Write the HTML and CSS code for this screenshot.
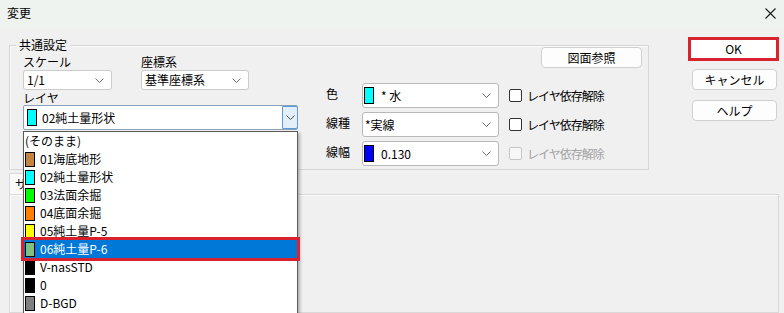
FILE: index.html
```html
<!DOCTYPE html>
<html lang="ja">
<head>
    <meta charset="UTF-8">
    <title>変更</title>
    <link rel="stylesheet" href="styles.css">
</head>
<body>
    <div class="window">
        <div class="titlebar">
            <span class="title">変更</span>
            <svg class="close" width="11" height="11" viewBox="0 0 11 11">
                <path d="M0.5 0.5 L10.5 10.5 M10.5 0.5 L0.5 10.5" stroke="#1a1a1a" stroke-width="1.1" fill="none"/>
            </svg>
        </div>

        <div class="content">
            <div class="top-row">
                <div class="group">
                    <span class="group-title">共通設定</span>

                    <div class="col-left">
                        <div class="pair">
                            <span class="lbl">スケール</span>
                            <span class="lbl">座標系</span>
                            <div class="combo">
                                <span class="value">1/1</span>
                                <svg class="chev" width="9" height="5" viewBox="0 0 9 5"><path d="M0.5 0.5 L4.5 4.5 L8.5 0.5" stroke="#6b6b6b" fill="none"/></svg>
                            </div>
                            <div class="combo">
                                <span class="value">基準座標系</span>
                                <svg class="chev" width="9" height="5" viewBox="0 0 9 5"><path d="M0.5 0.5 L4.5 4.5 L8.5 0.5" stroke="#6b6b6b" fill="none"/></svg>
                            </div>
                        </div>
                        <span class="lbl lbl-layer">レイヤ</span>
                        <div class="combo combo-layer">
                            <span class="swatch" style="background:#00ffff"></span>
                            <span class="value">02純土量形状</span>
                            <span class="drop-btn">
                                <svg width="9" height="5" viewBox="0 0 9 5"><path d="M0.5 0.5 L4.5 4.5 L8.5 0.5" stroke="#4d4d4d" fill="none"/></svg>
                            </span>

                            <ul class="droplist">
                                <li class="item plain">(そのまま)</li>
                                <li class="item"><span class="chip" style="background:#c3843f"></span>01海底地形</li>
                                <li class="item"><span class="chip" style="background:#00ffff"></span>02純土量形状</li>
                                <li class="item"><span class="chip" style="background:#00ff00"></span>03法面余掘</li>
                                <li class="item"><span class="chip" style="background:#ff8000"></span>04底面余掘</li>
                                <li class="item"><span class="chip" style="background:#ffff00"></span>05純土量P-5</li>
                                <li class="item selected"><span class="chip" style="background:#80c080"></span>06純土量P-6</li>
                                <li class="item"><span class="chip" style="background:#000000"></span>V-nasSTD</li>
                                <li class="item"><span class="chip" style="background:#000000"></span>0</li>
                                <li class="item"><span class="chip" style="background:#808080"></span>D-BGD</li>
                            </ul>
                        </div>
                    </div>

                    <div class="col-right">
                        <button class="btn btn-ref">図面参照</button>
                        <div class="props">
                            <span class="lbl">色</span>
                            <div class="combo combo-prop">
                                <span class="swatch" style="background:#00ffff"></span>
                                <span class="value">* 水</span>
                                <svg class="chev" width="9" height="5" viewBox="0 0 9 5"><path d="M0.5 0.5 L4.5 4.5 L8.5 0.5" stroke="#6b6b6b" fill="none"/></svg>
                            </div>
                            <label class="check"><span class="box"></span>レイヤ依存解除</label>

                            <span class="lbl">線種</span>
                            <div class="combo combo-prop">
                                <span class="value tight">*実線</span>
                                <svg class="chev" width="9" height="5" viewBox="0 0 9 5"><path d="M0.5 0.5 L4.5 4.5 L8.5 0.5" stroke="#6b6b6b" fill="none"/></svg>
                            </div>
                            <label class="check"><span class="box"></span>レイヤ依存解除</label>

                            <span class="lbl">線幅</span>
                            <div class="combo combo-prop">
                                <span class="swatch" style="background:#0000ff"></span>
                                <span class="value">0.130</span>
                                <svg class="chev" width="9" height="5" viewBox="0 0 9 5"><path d="M0.5 0.5 L4.5 4.5 L8.5 0.5" stroke="#6b6b6b" fill="none"/></svg>
                            </div>
                            <label class="check disabled"><span class="box"></span>レイヤ依存解除</label>
                        </div>
                    </div>
                </div>

                <div class="side-buttons">
                    <div class="ok-mark">
                        <button class="btn btn-ok">OK</button>
                    </div>
                    <button class="btn">キャンセル</button>
                    <button class="btn btn-help">ヘルプ</button>
                </div>
            </div>

            <div class="tabs">
                <div class="tab-strip">
                    <span class="tab">サ</span>
                </div>
                <div class="tab-pane"></div>
            </div>
        </div>
    </div>
</body>
</html>
```

FILE: styles.css
```css
* {
    margin: 0;
    padding: 0;
    box-sizing: border-box;
}

body {
    width: 784px;
    height: 313px;
    overflow: hidden;
    background-color: #f0f0f0;
    font-family: 'Noto Sans CJK JP', 'Noto Sans', sans-serif;
    font-size: 12px;
    color: #000;
}

.window {
    width: 784px;
    height: 313px;
    display: flex;
    flex-direction: column;
    overflow: hidden;
}

/* Title bar */
.titlebar {
    height: 28px;
    background-color: #eef3ef;
    display: flex;
    align-items: center;
    justify-content: space-between;
    padding: 0 8px 2px 7px;
}

.title {
    line-height: 14px;
}

.close {
    margin-top: 1px;
}

/* Dialog content */
.content {
    flex: 1;
    display: flex;
    flex-direction: column;
}

.top-row {
    display: flex;
    align-items: flex-start;
}

.group {
    position: relative;
    width: 640px;
    height: 125px;
    margin: 17px 0 0 9px;
    border: 1px solid #d6d6d6;
    box-shadow: inset 1px 1px 0 #fafafa;
    display: flex;
    align-items: flex-start;
}

.group-title {
    position: absolute;
    top: -8px;
    left: 6px;
    padding: 0 3px;
    line-height: 14px;
    background-color: #f0f0f0;
}

.lbl {
    line-height: 14px;
    white-space: nowrap;
}

/* Left column */
.col-left {
    width: 275px;
    margin: 9px 0 0 13px;
    display: flex;
    flex-direction: column;
}

.pair {
    display: grid;
    grid-template-columns: 89px 108px;
    grid-template-rows: 14px 20px;
    column-gap: 29px;
    row-gap: 1px;
}

.lbl-layer {
    margin-top: 1px;
}

.combo {
    position: relative;
    height: 20px;
    background-color: #fff;
    border: 1px solid #cbcbcb;
    border-radius: 3px;
    display: flex;
    align-items: center;
    padding-left: 3px;
}

.combo .value {
    flex: 1;
    line-height: 14px;
    white-space: nowrap;
}

.combo .chev {
    margin-right: 7px;
}

.swatch {
    width: 10px;
    height: 17px;
    border: 1px solid #000;
    margin-right: 4px;
    flex: none;
}

.combo-layer {
    height: 25px;
    border-color: #8a9fb8;
    border-radius: 2px;
}

.combo-layer .value {
    padding-left: 1px;
}

.drop-btn {
    width: 16px;
    height: 23px;
    margin-right: -1px;
    border: 1px solid #5b9bd8;
    border-radius: 0 2px 2px 0;
    background-color: #e3effb;
    display: flex;
    align-items: center;
    justify-content: center;
}

/* Drop-down list, open over the dialog */
.droplist {
    position: absolute;
    top: 25px;
    left: -1px;
    width: 275px;
    height: 182px;
    list-style: none;
    background-color: #fff;
    border: 1px solid #5a5a5a;
    border-bottom: none;
    box-shadow: 2px 2px 3px rgba(0, 0, 0, 0.28);
    z-index: 5;
}

.item {
    height: 18px;
    display: flex;
    align-items: center;
    padding-left: 1px;
    line-height: 14px;
    white-space: nowrap;
}

.chip {
    width: 10px;
    height: 15px;
    border: 1px solid #000;
    margin-right: 5px;
    flex: none;
}

.item.selected {
    background-color: #0078d7;
    color: #fff;
    outline: 3px solid #d8232f;
}

/* Right part of the group */
.col-right {
    width: 316px;
    margin-left: 28px;
    display: flex;
    flex-direction: column;
}

.btn {
    font-family: inherit;
    font-size: 12px;
    width: 85px;
    height: 21px;
    background-color: #fdfdfd;
    border: 1px solid #d0d0d0;
    border-radius: 4px;
    color: #000;
    line-height: 14px;
}

.btn-ref {
    align-self: flex-end;
    width: 101px;
    margin-top: 1px;
}

.props {
    margin-top: 15px;
    display: grid;
    grid-template-columns: 36px 137px auto;
    grid-auto-rows: 25px;
    row-gap: 4px;
    align-items: center;
}

.props .lbl {
    padding-bottom: 3px;
}

.combo-prop {
    height: 25px;
    border-color: #b9b9b9;
    padding-left: 1px;
}

.combo-prop .swatch {
    margin-right: 7px;
}

.combo-prop .tight {
    padding-left: 1px;
}

.check {
    margin-left: 10px;
    display: flex;
    align-items: center;
    white-space: nowrap;
    line-height: 14px;
    letter-spacing: -1px;
}

.check .box {
    width: 13px;
    height: 13px;
    border: 1px solid #333;
    border-radius: 2px;
    background-color: #fff;
    margin-right: 5px;
}

.check.disabled {
    color: #a3a3a3;
}

.check.disabled .box {
    border-color: #c6c6c6;
    background-color: #f7f7f7;
}

/* OK / Cancel / Help */
.side-buttons {
    margin: 9px 0 0 39px;
    display: flex;
    flex-direction: column;
    align-items: flex-end;
    gap: 8px;
}

.ok-mark {
    width: 91px;
    height: 24px;
    border: 3px solid #d8232f;
    margin-right: -2px;
}

.btn-ok {
    display: block;
    width: 85px;
    height: 18px;
    border: none;
    border-radius: 0;
    background-color: #fff;
}

.btn-help {
    margin-top: 2px;
}

/* Tab control below the group */
.tabs {
    flex: 1;
    margin: 3px 0 0 9px;
    width: 770px;
    display: flex;
    flex-direction: column;
}

.tab-strip {
    height: 21px;
    display: flex;
}

.tab {
    width: 40px;
    padding: 3px 0 0 5px;
    border: 1px solid #d9d9d9;
    border-bottom: none;
    background-color: #f9f9f9;
    line-height: 14px;
}

.tab-pane {
    flex: 1;
    border: 1px solid #d9d9d9;
    box-shadow: inset 1px 1px 0 #fbfbfb;
}
```
